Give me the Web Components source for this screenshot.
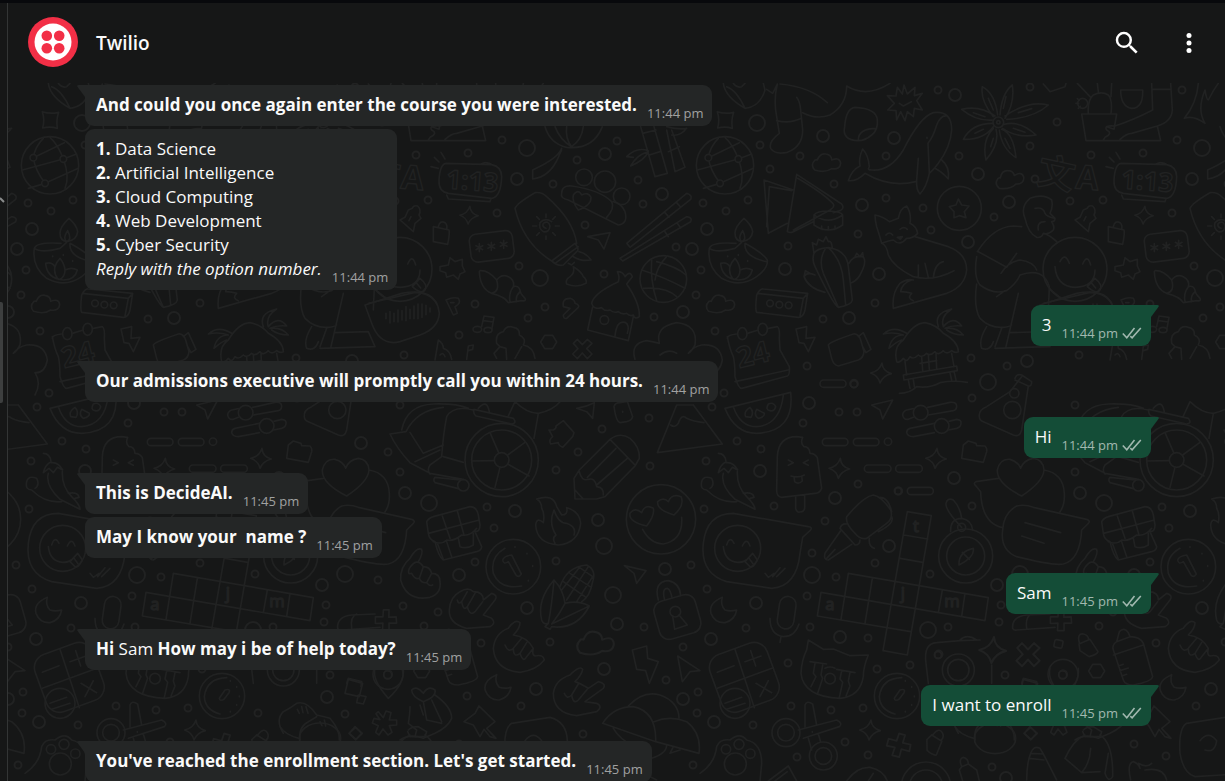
<!DOCTYPE html>
<html lang="en">
<head>
<meta charset="utf-8">
<title>Twilio chat</title>
<style>
  html, body { height: 100%; margin: 0; }
  body { background: #161717; color: #fafafa; font: 17px/24px "Open Sans", "Noto Sans", sans-serif; }
  b { font-weight: 660; }
</style>
</head>
<body>
<chat-app>
  <list-edge slot="edge"></list-edge>
  <chat-header slot="header" name="Twilio"></chat-header>
  <chat-message tail time="11:44 pm"><b>And could you once again enter the course you were interested.</b></chat-message>
  <chat-message time="11:44 pm"><b>1.</b> Data Science<br><b>2.</b> Artificial Intelligence<br><b>3.</b> Cloud Computing<br><b>4.</b> Web Development<br><b>5.</b> Cyber Security<br><i>Reply with the option number.</i></chat-message>
  <chat-message out tail time="11:44 pm">3</chat-message>
  <chat-message tail time="11:44 pm"><b>Our admissions executive will promptly call you within 24 hours.</b></chat-message>
  <chat-message out tail time="11:44 pm">Hi</chat-message>
  <chat-message tail time="11:45 pm"><b>This is DecideAI.</b></chat-message>
  <chat-message time="11:45 pm"><b>May I know your  name ?</b></chat-message>
  <chat-message out tail time="11:45 pm">Sam</chat-message>
  <chat-message tail time="11:45 pm"><b>Hi</b> Sam <b>How may i be of help today?</b></chat-message>
  <chat-message out tail time="11:45 pm">I want to enroll</chat-message>
  <chat-message tail time="11:45 pm"><b>You've reached the enrollment section. Let's get started.</b></chat-message>
</chat-app>

<template id="wallpaper-art">
<style>
  :host { display: block; overflow: hidden; }
  svg { display: block; width: 100%; height: 100%; }
  .ink { fill: none; stroke: #212222; stroke-width: 5; stroke-linecap: round; stroke-linejoin: round; }
  .dots { stroke-width: 2; }
  text { font-family: "Open Sans", sans-serif; stroke-width: 4; }
</style>
<svg aria-hidden="true">
  <defs>
    <path id="cloud" d="M-36 20Q-50 5-35-10Q-28-12-28-10Q-20-32-2-28Q15-25 15-10Q40-20 42 0Q40 20 15 16Q-5 30-36 20z"/>
    <path id="spark" d="M3-30Q5-5 31 2Q6 8-3 30Q-8 8-31 0Q-5-5 3-30z"/>
    <path id="cross" d="M-27-16L-15-28L0-12L15-28L29-16L13 0L29 16L15 30L0 13L-15 30L-29 16L-13 0z"/>
    <path id="hex" d="M-12-20H12L24 0L12 20H-12L-24 0z"/>
    <path id="moon" d="M-5-38Q-47-20-39 10Q-27 40 3 38Q33 30 38 0Q18 5 3 0Q-12-15-5-38z"/>
    <path id="clip" d="M-25-8L8-22L32 15Q28 25 5 30L-22 12zM-24-12Q-32-40-12-38Q2-36 4-22"/>
    <g id="tile" class="ink">
      <g id="dots" class="dots"></g>
      <g transform="translate(700 80) scale(.33333)">
        <path d="M70 10Q75 50 135 85Q180 80 195 30L190 10M80 20Q110 30 135 85M100 10Q110 25 125 20L135 10"/>
        <path d="M200 28L218 40L232 12Q220 60 230 110L238 160Q205 185 212 205Q225 225 262 217Q308 200 308 150L302 90Q300 65 290 52M230 122Q270 132 304 115M240 12Q330 20 382 68M308 98Q350 120 390 105Q440 75 440 18Q500 55 570 10"/>
        <path d="M52 95Q75 103 101 97Q93 120 97 145Q75 138 53 144Q60 120 52 95z"/>
        <path d="M465 82Q530 85 532 120Q535 150 515 165Q495 182 475 182Q425 180 434 140Q438 85 465 82zM475 180Q475 145 530 145"/>
        <path d="M612 15L622 42L645 22L643 47L667 40L650 62L667 90L643 85L640 110L622 95L615 122L602 95L590 120L588 92L563 90L583 70L562 47L588 48L592 22L607 42zM598 70L610 78L634 65"/>
        <path d="M445 302Q455 270 480 258Q475 235 488 207Q505 225 508 260Q500 270 515 270Q570 275 610 210Q660 110 700 98Q755 90 755 150Q752 200 715 250Q700 270 688 280Q680 320 660 342Q648 330 650 300L655 235M688 280L684 190Q700 170 710 135Q722 105 740 108M445 302Q470 305 495 280Q570 325 650 304M725 240Q750 260 745 297Q725 275 705 265M681 172v3"/>
        <path d="M880 110Q840 60 847 20Q885 40 893 105M900 105Q905 40 937 15Q945 70 915 115M915 108Q985 60 1045 75Q1000 115 920 118M912 133Q960 120 1008 165Q950 175 908 145M905 148Q940 160 948 233Q905 205 898 150M888 148Q900 190 858 240Q845 180 880 145M880 140Q850 180 790 178Q815 130 878 130M880 120Q830 125 785 88Q840 75 885 108M865 55l15 35M918 50l-8 35M955 98l40-12M940 145l35 12M915 175l15 30M880 175l-8 25M825 160l25-12M820 98l35 12"/>
        <circle cx="895" cy="127" r="16"/><circle cx="895" cy="127" r="5"/>
        <circle cx="75" cy="256" r="86"/>
        <path d="M60 310Q30 270 25 233Q30 200 55 175M115 237Q135 290 120 325M115 237Q100 195 75 172M25 233L118 188M10 325L60 310L160 265M-8 270L115 237L155 222"/>
        <g fill="#161717"><circle cx="25" cy="233" r="10"/><circle cx="115" cy="237" r="10"/><circle cx="60" cy="310" r="10"/></g>
        <use href="#cloud" x="380" y="250"/><use href="#cloud" transform="translate(930 299) rotate(-10)"/><use href="#cloud" x="62" y="674"/>
        <path d="M192 300L205 460L262 430M192 300L280 330M208 320L275 332M208 320L200 440M290 283L262 455Q270 460 280 455L340 425M290 283L425 372Q435 385 420 392L400 398M293 295Q370 340 400 372Q405 380 390 390L280 450M342 405Q350 393 385 393Q425 395 428 405V435Q385 465 342 435zM345 407Q385 435 428 405M365 438v10M385 440v10M405 438v10"/>
        <circle cx="778" cy="385" r="66"/><path d="M775 357L785 375L807 378L793 395L798 413L778 407L762 413L762 395L748 380L768 375z"/>
        <path d="M132 415Q105 440 105 460Q105 482 125 485Q155 482 158 455Q155 435 132 415zM128 452Q112 475 125 485Q142 480 128 452M108 490Q35 485 28 505Q20 560 65 595Q120 625 170 590Q205 565 202 540Q190 520 135 490Q130 530 200 545M28 505Q50 520 105 505L125 487M62 550Q80 545 90 560Q95 545 105 535Q118 550 120 570Q140 560 157 570Q150 600 115 600Q65 595 62 550zM90 560Q85 580 100 598M120 570Q120 590 105 598M83 528v2M115 524v2M143 542v2"/>
        <path d="M525 405Q550 410 568 425L595 415Q600 385 620 378Q635 400 630 430Q650 440 653 460Q640 475 620 475Q600 500 580 480Q555 485 545 490Q540 470 530 440Q525 420 525 405zM545 490Q560 495 565 525Q580 560 640 590Q700 605 762 572M645 470L745 500Q800 520 800 570Q795 620 740 640L580 685Q575 640 600 610Q620 595 640 600M635 600Q605 610 602 635Q620 635 635 640Q620 655 640 662M655 555V592M675 550L685 592M700 592Q705 550 730 545M558 465q10-12 20 0M600 448q12-10 22 0M592 472l15-2-6 8z"/>
        <path d="M342 520L337 488L350 495L355 478L370 485L378 470L385 485Q395 480 397 505M342 520Q350 505 385 503Q440 510 445 560L457 660Q455 675 415 682Q400 675 345 560Q335 540 342 520zM375 508Q355 540 370 580L415 682M385 503Q425 540 430 600L437 675M447 550Q460 525 490 530Q500 545 485 575Q475 600 455 608M345 585Q320 575 312 590Q325 625 375 637M465 530l5-10 10 10 8-12 2 15M312 590l4-18 14 8"/>
        <path d="M170 645Q180 625 190 627L323 640L315 690Q310 712 295 712L170 697Q165 690 170 645zM172 640L310 655L323 640M310 655L300 708"/>
        <circle cx="210" cy="670" r="10"/><circle cx="238" cy="674" r="10"/><circle cx="266" cy="676" r="10"/>
        <path d="M82 775Q82 765 110 762M142 760L175 750M205 745L232 740Q240 745 238 775L240 810L268 860Q270 885 262 888L125 925Q115 925 105 890Q105 850 100 830Q88 805 82 770M105 905L265 870"/>
        <ellipse cx="127" cy="761" rx="14" ry="18"/><ellipse cx="188" cy="748" rx="14" ry="18"/>
        <text transform="translate(118 865) rotate(-14)" font-size="86" font-weight="700">24</text>
        <path d="M288 747L320 740L318 775L345 772L325 815L312 790L297 788z"/>
        <path d="M385 795Q390 785 460 762Q475 760 482 780L492 815Q490 835 475 840L415 858Q400 855 395 835zM475 770L490 758L513 808L498 818L488 800"/>
        <path d="M590 845Q580 800 610 780Q640 730 675 728Q710 735 730 760Q775 785 775 815Q765 820 755 812Q740 825 730 812Q715 828 705 815Q690 830 680 820Q665 835 655 825Q640 840 630 830Q620 850 610 835Q600 850 590 845zM615 845L620 885M755 820L762 860M610 885L770 858L772 872L612 900zM625 900L630 925M640 898L643 920M750 878L755 900M763 878L768 900M665 830L668 872M685 825L688 868M708 820L710 865M660 850L710 842M598 940Q630 940 650 920Q690 925 720 908Q760 900 802 907M620 760Q580 735 550 762Q580 755 610 765Q575 765 567 805Q590 785 605 780M715 740Q700 700 755 687Q720 710 730 740Q760 705 785 738Q755 735 735 745Q770 740 790 765Q760 765 740 750"/>
        <rect x="360" y="900" width="78" height="22" rx="11"/><circle cx="462" cy="911" r="12"/>
        <use href="#spark" x="543" y="879"/>
        <path d="M515 975L578 960L548 1017L540 990z"/>
        <path d="M832 515Q880 440 940 438L965 440M835 515L920 562L950 520M903 580Q925 545 960 540Q1000 545 1010 570M830 530Q820 590 840 615Q880 645 920 632Q950 610 960 585Q1030 560 1048 620L1045 690M890 650L915 632M830 612Q820 680 840 715Q870 745 910 742Q930 740 935 735M955 640L918 800M905 745L885 800M860 740Q835 780 845 805Q870 815 880 785M885 805L1050 800L1030 755L930 758"/>
        <path d="M838 1010Q835 990 860 980L930 935L965 890M945 895Q950 880 965 885L995 905Q995 920 985 918L945 900M985 918L965 1050Q960 1072 940 1065L850 1025Q838 1020 838 1010"/><circle cx="943" cy="940" r="14"/><circle cx="937" cy="990" r="26"/>
      </g>
      <g transform="translate(1000 0) scale(.33333)">
        <path d="M75 655Q60 620 90 595Q130 580 155 600Q160 620 150 640L165 655Q165 665 155 665Q165 680 160 690Q145 705 130 700Q125 715 110 712Q85 700 75 655zM105 625Q130 620 135 640Q140 650 165 655M135 665Q110 665 115 690M130 700Q150 705 170 725M152 870L180 892"/>
        <circle cx="225" cy="808" r="96"/>
        <path d="M165 800Q170 860 225 862Q285 860 285 810M180 785Q195 755 208 790M248 792Q262 760 272 795M262 860L285 835Q310 855 300 870Q290 885 262 860zM275 850l12 14M130 910L270 877Q320 880 335 912"/>
        <path d="M320 380L342 388L350 342H245L258 422H482L472 378Q515 365 517 330L512 250M265 340Q262 300 280 285Q305 272 325 285Q338 300 333 340M232 250L270 290M292 250L295 275M335 250L333 290M362 270H428Q430 325 395 325Q362 320 362 270zM455 250L458 330Q400 360 345 378Q310 375 320 390Q340 400 315 412L310 420M360 418Q380 400 395 400L472 378M458 268H512M130 252L150 275L195 260L198 250M228 310h8M232 296l6 5M235 325l6-6"/>
        <circle cx="248" cy="310" r="15"/>
        <path d="M595 250Q590 310 553 355Q580 345 615 370Q590 330 615 270Q620 300 625 300Q640 270 655 250"/>
        <text transform="translate(106 548) rotate(12)" font-size="112" font-weight="700" style="font-family:'Noto Sans CJK SC',sans-serif">文</text>
        <text transform="translate(225 565) rotate(5)" font-size="100" font-weight="700">A</text>
        <path d="M365 490L500 494Q530 500 530 530Q528 590 500 595L370 580Q340 575 342 540Q345 490 365 490zM468 492Q485 482 505 496M365 585L370 597L495 605L498 595M318 500L340 505M328 472L342 486M348 457L360 477"/>
        <text transform="translate(362 565) rotate(4)" font-size="78" font-weight="700">1:13</text>
        <path d="M262 625Q265 615 278 618Q290 630 282 645L288 655L270 670L265 695L225 660L240 652L250 630zM258 650l-6 12"/>
        <use href="#spark" x="432" y="645" transform="translate(43 65) scale(.9)"/>
        <path d="M325 680L372 690Q375 700 368 733L325 725zM340 680Q345 660 360 668Q368 675 365 688"/>
        <path d="M345 800L370 795L375 773L390 785L412 778L412 798L420 815L405 822L400 838L385 825L365 832L362 818L345 812z"/>
        <rect x="435" y="697" width="130" height="84" rx="20" transform="rotate(-7 500 738)"/>
        <path d="M463 731v24M453 737l20 12M453 749l20-12M499 727v24M489 733l20 12M489 745l20-12M536 721v24M526 727l20 12M526 739l20-12"/>
      </g>
      <g transform="translate(400 80) scale(.33333)">
        <path d="M238 575Q240 625 275 640Q300 635 290 600Q265 570 240 572M290 600Q305 580 325 590Q345 600 340 620Q355 615 360 630Q360 640 375 655Q380 665 365 662L325 668Q315 650 275 640M340 620Q325 640 330 665M360 635Q345 650 350 665"/>
        <path d="M455 543Q370 490 345 385Q350 370 405 338Q425 335 440 350Q520 420 530 490M455 543L525 490Q540 510 530 515L490 555Q475 560 455 543M465 550L535 500M537 515Q560 520 573 540Q545 545 520 530M505 550l10 5 8-8"/>
        <path d="M438 445Q425 440 430 430Q445 420 450 438Q448 458 430 455Q415 445 420 428Q435 412 455 425M438 402v10M438 468v10M398 438h12M466 438h12M410 410l8 8M458 458l8 8M410 466l8-8M458 418l8-8"/>
        <path d="M520 560Q545 575 550 590Q562 600 558 610Q530 625 500 612Q495 598 510 590Q525 580 520 560z"/>
        <path d="M563 470L630 458L612 507L595 480z"/>
        <circle cx="552" cy="292" r="25"/><circle cx="615" cy="305" r="32"/><circle cx="665" cy="349" r="25"/>
        <path d="M485 340Q485 315 515 318Q600 330 635 365Q645 385 620 412M485 340Q480 355 505 360L655 435Q685 430 675 395Q665 370 640 365M520 345Q535 325 545 345Q565 335 573 352Q575 375 535 390Q515 365 520 345"/>
        <path d="M680 490L860 340Q878 345 872 358L690 502zM660 535L860 410Q878 412 872 425L668 543zM795 398l12 14M830 368l12 14M795 455l10 15M832 430l10 14"/>
        <path d="M722 140L765 290L802 280L762 140M800 150L825 275L855 262L815 150M728 160L768 150M748 225L780 215M805 215L838 200M680 230Q710 200 745 212M692 258Q710 225 745 215Q735 240 692 258M680 230L700 232M800 140Q840 150 860 145Q840 170 815 165"/>
        <path d="M435 140Q450 190 500 202Q580 210 607 140M465 140Q480 180 515 200M500 140Q495 175 515 200M550 140Q545 180 515 200M485 205Q475 235 398 270V297Q450 290 475 232Q480 220 485 210"/>
        <path d="M578 680L563 750L685 782L700 710M575 670Q580 640 655 605Q660 590 652 575Q670 575 675 590Q690 570 697 590L680 612Q720 670 718 710Q705 720 700 705Q690 710 680 700Q665 705 655 695Q640 700 630 690Q615 695 605 683Q580 690 575 670zM645 768Q650 720 675 727Q690 735 682 760"/><circle cx="613" cy="720" r="13"/>
        <circle cx="790" cy="597" r="70"/><path d="M725 570Q790 590 855 625M755 540Q750 600 770 662M800 530Q770 560 765 600M730 625Q800 620 830 650M770 545Q830 560 858 585"/>
        <path d="M-105 675L5 640Q110 620 118 700Q115 745 60 765L0 785Q-60 800-85 730zM-42 700v16M-30 695v34M-18 700v25M-6 690v36M6 692v28M18 680v42M30 688v28M42 678v38M54 672v44M66 672v40M78 676v28M90 684v12"/>
        <path d="M138 660Q160 650 175 655Q185 670 165 680L172 700L160 705zM152 668h10"/>
        <path d="M245 740L252 708L282 712L275 750M250 722L280 726"/><ellipse cx="232" cy="748" rx="13" ry="9"/><ellipse cx="264" cy="750" rx="12" ry="8"/>
        <path d="M290 790Q285 760 310 755Q320 735 340 742Q360 745 358 765Q380 775 370 795Q400 800 405 835M290 790L300 800L318 805L320 838M300 800L282 820L290 835M345 835L365 800"/>
        <use href="#hex" x="446" y="786"/><use href="#cross" x="547" y="806"/>
        <path d="M490 680Q485 655 510 655Q525 660 525 670Q540 675 535 682L500 715Q490 718 490 705L510 685z"/>
        <path d="M105 840L115 780Q130 790 130 805Q150 810 155 838M120 825q10-10 15 5M200 838L205 798L220 795L218 808L205 812"/>
        <path d="M705 838Q690 790 740 782Q760 785 778 790Q765 740 830 728Q895 735 885 795Q875 815 865 820Q880 800 905 795Q960 790 967 840Q960 880 930 878Q950 910 930 945M780 825Q805 805 830 820"/>
      </g>
      <g transform="translate(0 400) scale(.33333)">
        <path d="M150 25L347-23Q360 95 245 100Q180 100 150 25zM175 20Q195 80 245 80Q315 75 325-15M212 50Q205 35 225 22Q238 35 228 52zM245 28Q235 45 250 55Q270 50 268 40zM280 12Q295 5 302 20Q298 35 285 32Q270 30 280 12z"/>
        <path d="M695 30L715 26M758 22L825 7Q845 5 845 18Q845 30 835 32L760 45M715 52L700 58Q685 60 683 45Q683 35 695 30M705 85L778 70M822 64L845 58Q860 60 858 70Q858 82 845 85L820 90M778 98L715 110Q698 110 695 98Q695 88 705 85"/>
        <circle cx="737" cy="38" r="22"/><circle cx="800" cy="78" r="22"/>
        <path d="M850 1000Q825 960 850 935Q870 925 890 910Q920 900 950 945Q975 950 990 955Q1020 990 1018 1020M900 1020Q895 980 925 965L950 950M892 928l6 12M905 920l4 18M918 920l6 20M960 965l6 12M973 960l4 18"/>
        <path d="M1045 838L1088 850L1078 890L1035 880zM1075 885L1098 890L1090 912L1070 908zM1065 980L1085 1000L1068 1018L1048 1000z"/>
        <path d="M1165 895Q1115 840 1125 805M1165 895Q1215 850 1210 805"/><circle cx="1163" cy="825" r="12"/>
        <path d="M1135 935l15 18 8-20 15 5-5 22 22 0 0 15-22 2 8 20-12 8-15-18-12 18-10-8 8-20-18-8 5-14 18 4-12-18z"/>
      </g>
      <g transform="translate(380 400) scale(.33333)">
        <path d="M30 102L78 95Q110 30 190 22M30 102Q50 145 90 188L150 220L250 238M65 90Q80 15 160 12Q230 10 265 25M90 97L130 160L190 135M105 185L180 150M200 50Q190 100 185 170L150 195Q140 210 150 222M200 50Q220 15 280 30M282 28L400 55Q412 70 395 72L288 48Q278 40 282 28M295 25Q320-5 328 35M190 170L250 187M240 240L165 232Q158 240 165 248L235 266M385 48L405 5Q440 40 475 40L462 115M475 40Q520 30 540 5"/>
        <circle cx="365" cy="180" r="110"/><circle cx="365" cy="180" r="90"/><circle cx="365" cy="180" r="22"/><circle cx="250" cy="256" r="17"/>
        <path d="M275 183L343 182M330 98L357 160M435 127L383 165M447 228L383 192M345 262L360 202"/>
        <path d="M590 25Q620 20 643 8L638 55L620 35zM702 20Q705 8 720 8L742 4L758 50Q755 62 740 65L720 68Q708 65 702 20zM728 34v3"/>
        <path d="M890 15L832 158L1027 132L940 15M890 15H940M872 75Q885 85 895 70Q905 40 920 55Q940 65 972 68"/>
        <path d="M585 297L582 235L598 210L690 118Q720 95 750 115Q780 140 778 175L765 198L675 290L650 297zM598 215Q605 245 625 238Q645 232 650 260Q672 262 670 285M622 232L708 145M650 255L742 175M690 118L765 195M585 270L608 295"/>
        <path d="M507 90L520 90Q530 85 528 78L550 62L582 98L578 110L548 142Q535 135 535 128L512 132Q505 120 518 110z"/>
        <path d="M470 297Q520 280 530 320L545 345Q565 345 560 323Q600 335 602 370Q595 430 535 435Q470 430 467 375Q470 350 490 368Q495 340 485 325Q485 305 470 297zM525 430Q515 415 528 405Q505 370 522 330Q535 370 560 370Q590 380 582 405"/>
        <path d="M140 365Q145 355 160 350L270 320Q290 320 295 345L300 375Q300 395 285 395L305 440Q305 450 290 455L190 480Q175 470 165 425Q148 420 145 400zM145 400L298 360M187 348L210 415M232 333L252 405M160 425Q185 435 200 420Q220 425 245 405Q270 410 290 385M172 430L190 478M200 425L215 470M235 415L240 440Q260 448 280 435V400"/>
        <circle cx="400" cy="500" r="82"/><path d="M375 445Q330 470 340 520Q360 570 425 558M368 480Q372 468 395 465L424 522Q415 535 408 525L385 485Q370 495 368 480M405 440v2M441 460v2M458 497v2M445 541v2"/>
        <circle cx="843" cy="358" r="104"/><path d="M800 378Q745 365 750 340Q765 320 785 338Q795 310 820 325Q825 345 800 378zM882 345Q830 330 833 305Q850 290 865 305Q875 280 903 290Q915 315 882 345zM788 388Q810 430 850 432Q910 420 905 352"/>
        <path d="M95 520Q80 525 88 505Q110 470 130 500Q150 500 155 520Q180 520 180 545Q185 580 150 592Q80 605 62 540Q60 500 90 475Q110 440 125 448Q130 460 115 485M95 520Q105 540 118 535Q125 550 140 548Q150 560 158 555M118 535L130 500M140 548L155 520"/>
        <path d="M208 630Q210 590 240 575Q265 560 280 575Q310 575 310 600L335 580Q355 585 345 600L310 645L335 655Q350 670 330 680L260 685Q205 670 208 630zM232 600Q235 615 245 605L262 575M245 605Q250 635 262 620L285 580M262 620Q270 650 285 635L308 605"/>
        <path d="M340 745Q345 700 385 685Q405 655 420 668Q420 685 400 705Q440 710 460 745Q455 765 465 768Q490 762 493 780Q470 810 420 817Q345 810 340 745zM375 735Q385 760 400 745L425 715M400 745Q400 775 420 760L440 728M420 760Q430 790 440 770L460 745"/>
        <path d="M520 880Q525 840 570 825Q600 795 608 808Q605 825 585 845Q600 850 625 865L655 845Q680 850 670 865L615 905L650 910Q670 920 650 935L590 947Q520 940 520 880zM553 880Q560 900 575 885L595 852M575 885Q580 915 595 900L622 868"/>
        <path d="M522 540Q470 600 485 660Q490 675 505 670L495 680L510 688L515 680Q590 690 628 618Q595 600 555 610Q550 570 522 540zM522 540Q515 620 505 670M555 610Q540 640 515 672L628 618M540 560Q560 500 620 495Q650 510 638 545Q630 590 605 605M550 545L615 590M570 520L630 560M595 500L638 530M625 500L560 600M600 500L545 570M638 530L590 605"/>
        <use href="#cloud" transform="translate(647 732) scale(1.3)"/>
        <rect x="828" y="592" width="128" height="118" rx="30" transform="rotate(-16 892 650)"/>
        <path d="M835 600Q820 545 865 542Q900 550 902 587M854 600Q845 565 862 565Q872 570 876 594M878 648L884 688L922 675L897 645"/><circle cx="886" cy="635" r="16"/>
        <path d="M733 497L798 512L770 550L762 520zM757 750L800 738L803 775L835 785L808 850L797 812L770 808zM893 768L960 812L930 815L907 845z"/>
        <use href="#moon" x="355" y="862"/>
        <path d="M668 970Q700 920 760 920Q830 935 827 1025zM745 918Q790 870 840 885Q895 905 897 953M822 965Q870 945 920 965Q965 1000 957 1060L827 1025M700 985Q720 1020 765 1040L815 1075Q860 1060 860 1035M880 1040L870 1060L900 1050M765 1040Q790 1080 770 1110L830 1140"/>
        <path d="M130 905Q95 890 95 870Q110 855 130 880Q145 855 165 870Q170 890 130 905M165 885Q215 920 215 955Q205 980 165 1000M90 920Q90 940 85 970L110 990L105 1010M130 905L140 960L185 970M120 915l10 30M155 900l30 65M60 1020Q90 1000 130 1015L165 1000"/>
        <path d="M252 965L285 940L297 918L345 965L320 985L348 1015L330 1010L312 988L300 1010L280 975z"/>
        <path d="M375 1060Q370 985 395 970L510 952Q560 965 562 1022L570 1080Q560 1120 500 1125L420 1130Q385 1120 375 1060M435 1022Q460 990 485 1022Q480 1060 450 1050"/>
      </g>
      <g transform="translate(700 410) scale(.33333)">
        <path d="M232 140Q235 80 290 80L308 82Q300 100 312 110Q328 110 330 130Q345 130 352 143L365 235Q360 250 345 250L245 262Q228 260 230 235zM287 262V295Q290 308 300 306Q315 305 314 290V258M265 150l15 8-15 8M325 150l-15 8 15 8M273 198Q295 205 313 195M282 200L284 215Q295 225 307 213L305 198"/>
        <path d="M55 130Q75 130 78 155Q60 165 55 188L72 175L85 188L97 172L113 180Q100 155 78 158M70 190Q60 225 105 268L165 298Q165 285 140 260Q110 230 112 185M5 215Q10 195 35 205Q45 225 30 235M5 215Q0 240 20 240Q60 280 110 275M130 250Q160 245 162 262L150 265"/>
        <rect x="367" y="85" width="77" height="22" rx="11"/><rect x="460" y="85" width="77" height="22" rx="11"/><circle cx="564" cy="95" r="11"/>
        <rect x="493" y="165" width="80" height="22" rx="11"/><rect x="587" y="165" width="80" height="22" rx="11"/>
        <circle cx="596" cy="243" r="11"/><rect x="622" y="232" width="78" height="22" rx="11"/>
        <use href="#spark" x="418" y="175"/><use href="#spark" x="708" y="145"/>
        <path d="M790 105L805 93L828 100L830 107L855 108Q862 115 860 125L850 157L785 145z"/>
        <path d="M100 310L325 350Q340 352 330 362L308 382L300 430Q290 530 215 535L80 515Q0 490 10 400Q20 310 100 310z"/><circle cx="113" cy="415" r="69"/>
        <path d="M70 410Q75 455 113 457Q130 457 138 450M80 405Q90 375 102 400M127 408Q140 380 150 408M135 455L158 430L172 450Q160 475 150 470zM147 445l12 16M195 490L205 502L222 490M218 500L240 473M230 500L255 475"/>
        <path d="M440 320Q490 260 520 255Q545 260 572 300Q580 325 560 340L500 385Q480 390 465 370Q435 340 440 320zM440 342Q425 340 420 355L465 405Q480 405 480 390M422 362L375 430Q370 450 385 450L455 403M380 445L405 418M508 385Q505 410 523 415M540 262Q565 262 575 305M575 320Q585 340 535 365"/>
        <path d="M622 305L694 317L622 735L549 722zM612 375L683 387M601 445L668 457M445 490L865 563L855 632L363 547L352 618L632 665M445 490L423 628M517 505L495 640M727 540L715 608M795 550L785 620"/>
        <g font-size="50"><text x="639" y="366">t</text><text x="376" y="600">a</text><text x="602" y="568">j</text><text x="733" y="592">m</text></g>
        <circle cx="797" cy="438" r="81"/><circle cx="797" cy="438" r="57"/><circle cx="785" cy="352" r="12"/>
        <path d="M752 365Q750 325 785 325Q815 330 818 360M785 352Q735 300 738 280Q742 262 760 270Q780 290 785 325M820 415Q825 440 777 465Q775 425 820 415zM787 427L808 448"/>
        <use href="#moon" x="72" y="600"/>
        <rect x="235" y="559" width="50" height="98" rx="25" transform="rotate(8 260 608)"/><path d="M210 625Q210 675 250 680Q285 680 297 642M243 680L240 697"/>
        <rect x="42" y="711" width="182" height="182" rx="42" transform="rotate(-20 133 802)"/>
        <path d="M105 718L163 893M52 835L220 773M52 787L102 767M135 755L183 738M152 722L167 768M168 820L215 848M205 812L180 860M75 880L125 862M80 898L135 880"/><circle cx="105" cy="880" r="45"/>
        <path d="M325 690L370 718L400 717L450 737L505 735Q490 770 490 800Q480 860 420 865Q310 860 303 790Q305 750 320 720zM330 755L380 762M410 778L465 788M345 760l-5 30 8 10-15 30M368 765l-5 30 5 10-15 45M425 782l-5 25 8 10-10 45M450 788l-5 25 5 15-12 30M375 775q15-8 30 0"/><circle cx="390" cy="806" r="16"/>
        <circle cx="591" cy="858" r="68"/><path d="M585 912Q540 900 538 860Q545 805 605 803M583 865L600 840Q618 835 612 848L597 868Q585 875 583 865zM616 812v2M635 830v2M643 858v2M635 884v2M616 904v2"/>
        <circle cx="258" cy="968" r="42"/><circle cx="258" cy="968" r="25"/><circle cx="370" cy="1038" r="42"/><circle cx="370" cy="1038" r="25"/>
        <path d="M295 960L410 930Q430 940 418 950L310 985M315 955V885Q320 870 338 882L350 945M325 985L335 1020M355 972L362 996M337 965v2"/>
        <use href="#spark" x="510" y="960"/><use href="#cross" transform="translate(597 1005) rotate(60) scale(1.1)"/><use href="#clip" transform="translate(703 1000) rotate(55)"/>
        <path d="M0 1090Q45 1060 50 1010Q60 985 90 990Q120 965 140 990Q185 1000 185 1060L180 1113"/>
        <circle cx="117" cy="1003" r="15"/><circle cx="78" cy="1018" r="14"/><circle cx="151" cy="1031" r="14"/><circle cx="106" cy="1062" r="33"/>
        <path d="M205 1113L265 1068L290 1113M225 1113L262 1085M440 1113Q470 1070 510 1072Q550 1080 562 1113M505 1113L520 1090M785 1070Q775 1045 790 1042Q805 1045 805 1062L830 1080L838 1113M785 1070L778 1080L788 1113M785 1070L805 1062"/>
        <circle cx="678" cy="1130" r="74"/><circle cx="678" cy="1130" r="50"/>
      </g>
      <g transform="translate(900 410) scale(.33333)">
        <path d="M365 258Q290 220 292 180Q300 145 330 148Q355 155 362 175Q370 150 400 145Q430 148 432 180Q430 215 365 258zM295 205L228 215Q218 220 228 228L242 245Q245 340 308 353M432 180Q490 190 493 250Q495 285 480 305M350 288Q375 282 400 292L560 328Q572 333 565 340L545 360Q540 450 490 462Q460 468 350 440Q300 420 308 360Q310 310 350 288zM375 338L482 368M365 378L432 400"/>
        <path d="M85 820L78 760Q70 700 110 698L180 692L240 690M275 765V820M180 690Q200 670 230 690"/><circle cx="175" cy="780" r="48"/><circle cx="175" cy="780" r="32"/><circle cx="116" cy="733" r="12"/>
        <use href="#spark" transform="translate(278 720) scale(1.3)"/><use href="#cross" transform="translate(384 733) scale(1.2)"/>
        <rect x="463" y="690" width="25" height="23" rx="5" transform="rotate(12 475 701)"/><use href="#clip" x="562" y="710"/>
        <circle cx="489" cy="793" r="45"/><circle cx="489" cy="793" r="13"/><use href="#hex" x="590" y="783"/>
        <path d="M640 720Q635 705 650 695L658 665Q672 650 685 668L690 680Q720 680 730 700L758 800Q755 815 700 825Q675 825 670 810zM640 735L730 705M650 695L690 680M655 768l15-5M660 782l25-8M665 798l15-5"/>
        <path d="M338 655Q335 620 380 615L450 612M338 655Q340 662 350 660L465 652M380 655Q375 620 395 612"/><use href="#cross" transform="translate(483 630) rotate(45)"/>
        <path d="M365 820L370 805L410 815L408 830M165 950Q180 975 222 985M372 970L392 952L412 970L392 990z"/><ellipse cx="285" cy="985" rx="62" ry="46"/>
        <path d="M550 960Q560 950 580 950L605 965L600 980H555L548 965M495 1045Q520 990 555 975M600 975Q640 1000 638 1100Q625 1120 615 1090L625 1030M572 1015Q570 1060 545 1088L495 1045M545 1088L600 1085M692 1110Q680 1060 700 1055Q715 1060 720 1075L715 1060Q740 1075 755 1060M735 1080Q790 1070 800 1110M380 1110Q380 1060 392 1030L430 1032L470 1110M392 1030Q400 1005 420 1015L430 1032M388 1045L432 1050"/>
      </g>
    </g>
  </defs>
  <use href="#tile" x="-675" y="-83"/><use href="#tile" y="-83"/><use href="#tile" x="675" y="-83"/><use href="#tile" x="-1350" y="-83"/>
</svg>
</template>

<script>
/* Rings scattered between the doodles: small, medium and large. */
const RINGS = {
  3.5: [[263,90],[85,145],[125,156],[211,156],[284,156],[95,169],[159,184],[355,87],[355,146],[360,179],[73,200],[28,203],[51,211],[211,198],[248,208],[319,217],[183,234],[256,230],[113,246],[26,270],[200,303],[148,319],[40,331],[132,366],[179,384],[296,358],[332,366],[49,393],[37,407],[164,412],[182,412],[297,398],[507,90],[382,122],[416,155],[468,153],[502,140],[395,201],[428,200],[497,213],[519,266],[475,304],[545,307],[528,318],[577,160],[617,141],[553,184],[638,180],[643,204],[585,225],[676,247],[604,274],[459,335],[404,355],[654,317],[21,295],
    [62,441],[86,449],[31,461],[128,423],[183,484],[29,509],[99,506],[150,521],[223,491],[297,506],[16,565],[137,553],[161,577],[200,563],[255,574],[378,580],[32,589],[132,596],[326,605],[324,622],[273,627],[71,628],[135,627],[193,638],[113,663],[202,669],[235,665],[263,655],[330,675],[23,692],[116,706],[156,710],[188,708],[22,713],[78,725],[258,713],[345,714],[18,765],[170,742],[193,755],[122,757],[317,767],[400,405],[388,452],[400,472],[487,507],[494,528],[475,562],[556,470],[578,452],[602,429],[649,418],[650,466],[556,561],[438,612],[403,606],[424,626],[644,627],[550,642],[481,643],[683,647],[666,680],[467,696],[521,706],[459,744],[583,734],[491,756]],
  6: [[280,95],[148,136],[219,138],[303,174],[32,229],[187,205],[334,202],[293,242],[110,269],[204,274],[174,318],[352,361],[134,403],[517,179],[605,154],[662,194],[17,249],[8,312],
    [85,471],[279,478],[361,443],[160,498],[214,546],[322,585],[81,603],[36,639],[165,637],[327,697],[39,722],[405,493],[515,511],[459,575],[598,520],[665,569],[527,608],[617,624],[604,669],[536,689],[8,699],[331,778]],
  8: [[82,123],[313,382],[527,148],[540,278],[137,575],[345,574],[253,630],[429,503],[604,546],[613,595]]
};

class ChatWallpaper extends HTMLElement {
  constructor() {
    super();
    const root = this.attachShadow({ mode: 'open' });
    root.append(document.getElementById('wallpaper-art').content.cloneNode(true));
    root.getElementById('dots').innerHTML = Object.entries(RINGS)
      .map(([r, list]) => list.map(([x, y]) => `<circle cx="${x}" cy="${y}" r="${r}"/>`).join('')).join('');
  }
}
customElements.define('chat-wallpaper', ChatWallpaper);

class ListEdge extends HTMLElement {
  constructor() {
    super();
    this.attachShadow({ mode: 'open' }).innerHTML = `
      <style>
        :host { display: grid; grid-template-rows: 193px 106px 101px; width: 7px; border-right: 1px solid #333535; overflow: hidden; }
        svg { grid-row: 2; display: block; }
        div { grid-row: 3; width: 3px; background: #3d3f3f; border-radius: 0 2px 2px 0; }
      </style>
      <svg width="6" height="8" viewBox="0 0 6 8" aria-hidden="true"><path d="M0 2l4 4" stroke="#8a8c8c" stroke-width="2"/></svg>
      <div></div>`;
  }
}
customElements.define('list-edge', ListEdge);

class ChatHeader extends HTMLElement {
  constructor() {
    super();
    this.attachShadow({ mode: 'open' }).innerHTML = `
      <style>
        :host { display: block; }
        header { display: flex; align-items: center; height: 80px; box-sizing: border-box; padding: 0 21px 0 20px; }
        .avatar { display: block; margin: 0 18px 2px 0; }
        h1 { flex: 1; margin: 0; font-size: 19px; font-weight: 600; line-height: 28px; }
        nav { display: flex; gap: 32px; }
        button { display: block; padding: 0; border: 0; background: none; color: #fff; cursor: pointer; }
        button svg { display: block; fill: currentColor; }
      </style>
      <header>
        <svg class="avatar" width="50" height="50" viewBox="0 0 50 50" role="img" aria-label="Twilio logo">
          <circle cx="25" cy="25" r="25" fill="#f22f46"/><circle cx="25" cy="25" r="18.5" fill="#fff"/>
          <g fill="#f22f46"><circle cx="18.8" cy="18.8" r="5.3"/><circle cx="31.2" cy="18.8" r="5.3"/><circle cx="18.8" cy="31.2" r="5.3"/><circle cx="31.2" cy="31.2" r="5.3"/></g>
        </svg>
        <h1></h1>
        <nav>
          <button type="button" aria-label="Search"><svg width="30" height="30" viewBox="0 0 24 24"><path d="M15.5 14h-.79l-.28-.27A6.47 6.47 0 0 0 16 9.5 6.5 6.5 0 1 0 9.5 16c1.61 0 3.09-.59 4.23-1.57l.27.28v.79l5 4.99L20.49 19zm-6 0C7.01 14 5 11.99 5 9.5S7.01 5 9.5 5 14 7.01 14 9.5 11.99 14 9.5 14z"/></svg></button>
          <button type="button" aria-label="Menu"><svg width="30" height="30" viewBox="0 0 24 24"><circle cx="12" cy="6" r="2"/><circle cx="12" cy="12" r="2"/><circle cx="12" cy="18" r="2"/></svg></button>
        </nav>
      </header>`;
    this.shadowRoot.querySelector('h1').textContent = this.getAttribute('name');
  }
}
customElements.define('chat-header', ChatHeader);

class ChatMessage extends HTMLElement {
  constructor() {
    super();
    const out = this.hasAttribute('out');
    this.attachShadow({ mode: 'open' }).innerHTML = `
      <style>
        :host { --fill: #242626; --meta: #a0a1a1; display: flex; margin-top: 3px; }
        :host([tail]) { margin-top: 15px; }
        :host([tail]:first-of-type) { margin-top: 0; }
        :host([out]) { --fill: #144d37; --meta: #a1b8af; justify-content: flex-end; }
        .bubble { position: relative; display: flex; align-items: flex-end; gap: 10px; padding: 8px 9px 4px 11px; border-radius: 9px; background: var(--fill); }
        :host([tail]) .bubble { border-top-left-radius: 0; }
        :host([out][tail]) .bubble { border-radius: 9px 0 9px 9px; }
        .text { margin-bottom: 5px; white-space: pre-wrap; }
        .meta { display: flex; align-items: center; gap: 4px; color: var(--meta); font-size: 13px; line-height: 18px; white-space: nowrap; }
        .ticks { display: block; fill: none; stroke: currentColor; stroke-width: 1.6; }
        .tail { position: absolute; top: 0; right: 100%; fill: var(--fill); }
        :host([out]) .tail { right: auto; left: 100%; transform: scaleX(-1); }
      </style>
      <div class="bubble">
        ${this.hasAttribute('tail') ? '<svg class="tail" width="8" height="12" viewBox="0 0 8 12" aria-hidden="true"><path d="M8 0H1.5Q-.5.3.6 2L8 12z"/></svg>' : ''}
        <div class="text"><slot></slot></div>
        <div class="meta"><time></time>${out ? '<svg class="ticks" width="20" height="14" viewBox="0 0 20 14" role="img" aria-label="Delivered"><path d="M.8 7.5l4 4.2L12.5 2M8.3 10.2l1.8 1.6L18.8 2"/></svg>' : ''}</div>
      </div>`;
    this.shadowRoot.querySelector('time').textContent = this.getAttribute('time');
  }
}
customElements.define('chat-message', ChatMessage);

class ChatApp extends HTMLElement {
  constructor() {
    super();
    this.attachShadow({ mode: 'open' }).innerHTML = `
      <style>
        :host { display: grid; grid-template-columns: auto 1fr; height: 100vh; box-sizing: border-box; border-top: 3px solid #08090c; overflow: hidden; }
        main { display: grid; grid-template-rows: auto 1fr; min-width: 0; min-height: 0; }
        .room { display: grid; min-height: 0; overflow: hidden; }
        .room > * { grid-area: 1 / 1; min-height: 0; }
        chat-wallpaper { margin-left: -8px; }
        .log { position: relative; padding: 2px 74px 0 77px; }
      </style>
      <slot name="edge"></slot>
      <main>
        <slot name="header"></slot>
        <div class="room">
          <chat-wallpaper></chat-wallpaper>
          <div class="log" role="log"><slot></slot></div>
        </div>
      </main>`;
  }
}
customElements.define('chat-app', ChatApp);
</script>
</body>
</html>
